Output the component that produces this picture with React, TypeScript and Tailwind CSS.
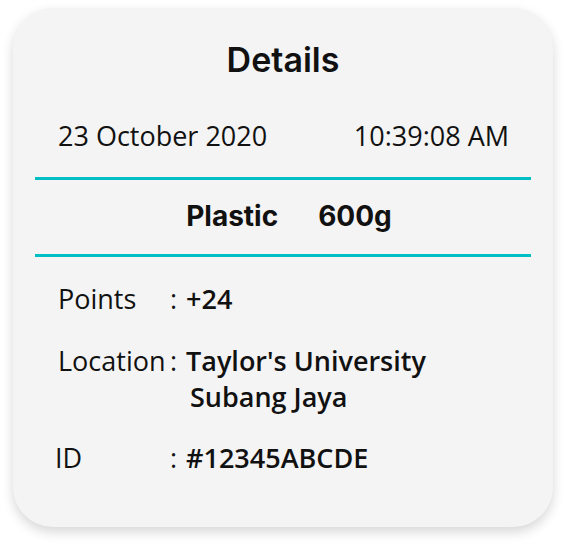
const rows = [
  { label: 'Points', value: ['+24'] },
  { label: 'Location', value: ["Taylor's University", 'Subang Jaya'] },
]

export default function App() {
  return (
    <div className="min-h-screen bg-white pl-[13px] pt-[8px]">
      <div
        className="w-[540px] rounded-[40px] bg-[#f4f4f4] pt-[32px] pb-[51px] text-[#111] shadow-[0_5px_12px_rgba(0,0,0,0.16)]"
        style={{ fontFamily: '"Open Sans", sans-serif' }}
      >
        {/* Title */}
        <h1
          className="h-[40px] text-center text-[34px] leading-[40px] font-semibold"
          style={{ fontFamily: 'Inter, sans-serif' }}
        >
          Details
        </h1>

        {/* Date / time */}
        <div className="mt-[38px] flex justify-between pl-[45px] pr-[44px] text-[27px] leading-[36px]">
          <span>23 October 2020</span>
          <span>10:39:08 AM</span>
        </div>

        <div className="mx-[22px] mt-[23px] h-[3px] bg-[#00bfc4]" />

        <div
          className="mt-[18px] flex justify-center gap-[40px] pl-[12px] text-[28px] leading-[36px] font-bold"
          style={{ fontFamily: 'Inter, sans-serif' }}
        >
          <span>Plastic</span>
          <span>600g</span>
        </div>

        <div className="mx-[22px] mt-[20px] h-[3px] bg-[#00bfc4]" />

        {/* Info rows */}
        <div className="pl-[45px] text-[27px] leading-[36px]">
          {rows.map((r, i) => (
            <div key={r.label} className={`flex ${i === 0 ? 'mt-[24px]' : 'mt-[26px]'}`}>
              <span className="w-[112px] shrink-0">{r.label}</span>
              <span className="w-[16px] shrink-0">:</span>
              <div className="font-semibold">
                {r.value.map((v, j) => (
                  <div key={v} className={j > 0 ? 'pl-[4px]' : ''}>
                    {v}
                  </div>
                ))}
              </div>
            </div>
          ))}
          <div className="mt-[25px] flex">
            <span className="-ml-[3px] w-[115px] shrink-0">ID</span>
            <span className="w-[16px] shrink-0">:</span>
            <span className="font-semibold">#12345ABCDE</span>
          </div>
        </div>
      </div>
    </div>
  )
}
